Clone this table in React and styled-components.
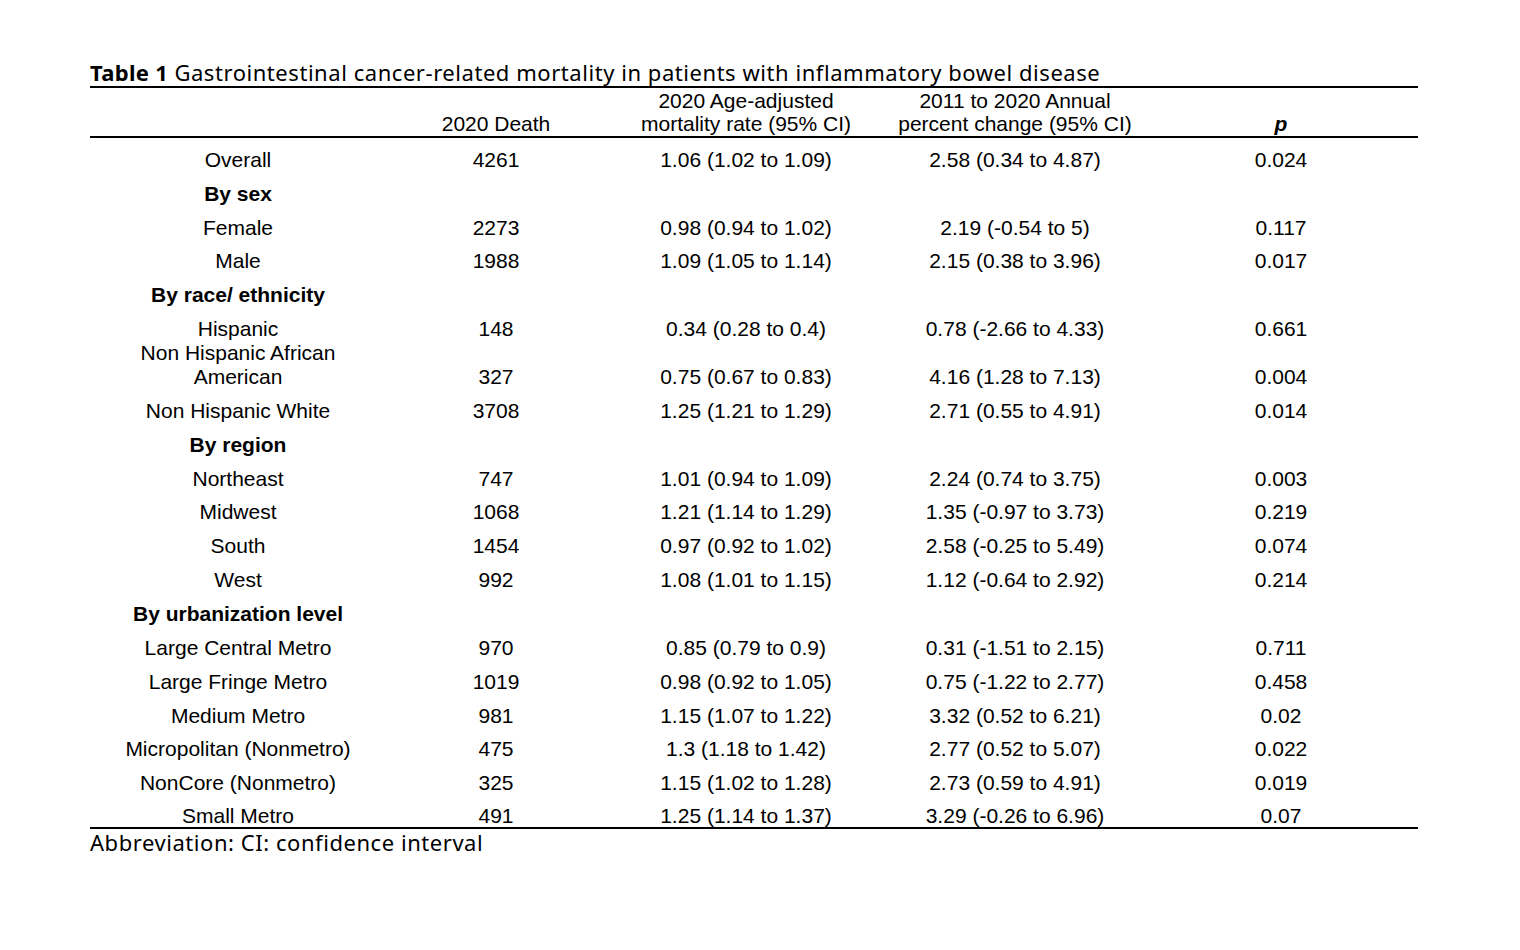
import React from 'react';
import styled, { createGlobalStyle } from 'styled-components';

const rows = [
  { label: 'Overall', death: '4261', rate: '1.06 (1.02 to 1.09)', apc: '2.58 (0.34 to 4.87)', p: '0.024' },
  { group: 'By sex' },
  { label: 'Female', death: '2273', rate: '0.98 (0.94 to 1.02)', apc: '2.19 (-0.54 to 5)', p: '0.117' },
  { label: 'Male', death: '1988', rate: '1.09 (1.05 to 1.14)', apc: '2.15 (0.38 to 3.96)', p: '0.017' },
  { group: 'By race/ ethnicity' },
  { label: 'Hispanic', death: '148', rate: '0.34 (0.28 to 0.4)', apc: '0.78 (-2.66 to 4.33)', p: '0.661' },
  { label: ['Non Hispanic African', 'American'], death: '327', rate: '0.75 (0.67 to 0.83)', apc: '4.16 (1.28 to 7.13)', p: '0.004' },
  { label: 'Non Hispanic White', death: '3708', rate: '1.25 (1.21 to 1.29)', apc: '2.71 (0.55 to 4.91)', p: '0.014' },
  { group: 'By region' },
  { label: 'Northeast', death: '747', rate: '1.01 (0.94 to 1.09)', apc: '2.24 (0.74 to 3.75)', p: '0.003' },
  { label: 'Midwest', death: '1068', rate: '1.21 (1.14 to 1.29)', apc: '1.35 (-0.97 to 3.73)', p: '0.219' },
  { label: 'South', death: '1454', rate: '0.97 (0.92 to 1.02)', apc: '2.58 (-0.25 to 5.49)', p: '0.074' },
  { label: 'West', death: '992', rate: '1.08 (1.01 to 1.15)', apc: '1.12 (-0.64 to 2.92)', p: '0.214' },
  { group: 'By urbanization level' },
  { label: 'Large Central Metro', death: '970', rate: '0.85 (0.79 to 0.9)', apc: '0.31 (-1.51 to 2.15)', p: '0.711' },
  { label: 'Large Fringe Metro', death: '1019', rate: '0.98 (0.92 to 1.05)', apc: '0.75 (-1.22 to 2.77)', p: '0.458' },
  { label: 'Medium Metro', death: '981', rate: '1.15 (1.07 to 1.22)', apc: '3.32 (0.52 to 6.21)', p: '0.02' },
  { label: 'Micropolitan (Nonmetro)', death: '475', rate: '1.3 (1.18 to 1.42)', apc: '2.77 (0.52 to 5.07)', p: '0.022' },
  { label: 'NonCore (Nonmetro)', death: '325', rate: '1.15 (1.02 to 1.28)', apc: '2.73 (0.59 to 4.91)', p: '0.019' },
  { label: 'Small Metro', death: '491', rate: '1.25 (1.14 to 1.37)', apc: '3.29 (-0.26 to 6.96)', p: '0.07' },
];

function App() {
  return (
    <>
      <GlobalStyle />
      <Page>
        <Figure>
          <Caption>
            <b>Table 1</b> Gastrointestinal cancer-related mortality in patients with inflammatory bowel disease
          </Caption>
          <Table>
            <colgroup>
              <col style={{ width: 296 }} />
              <col style={{ width: 220 }} />
              <col style={{ width: 280 }} />
              <col style={{ width: 258 }} />
              <col style={{ width: 274 }} />
            </colgroup>
            <thead>
              <tr>
                <HeadCell />
                <HeadCell>2020 Death</HeadCell>
                <HeadCell>2020 Age-adjusted<br />mortality rate (95% CI)</HeadCell>
                <HeadCell>2011 to 2020 Annual<br />percent change (95% CI)</HeadCell>
                <HeadCell><PLetter>p</PLetter></HeadCell>
              </tr>
            </thead>
            <tbody>
              {rows.map((r, i) =>
                r.group ? (
                  <Row key={i}>
                    <Cell $bold>{r.group}</Cell>
                    <Cell />
                    <Cell />
                    <Cell />
                    <Cell />
                  </Row>
                ) : (
                  <Row key={i} $tall={Array.isArray(r.label)}>
                    <Cell>
                      {Array.isArray(r.label) ? (
                        <TwoLine>
                          {r.label[0]}
                          <br />
                          {r.label[1]}
                        </TwoLine>
                      ) : (
                        r.label
                      )}
                    </Cell>
                    <Cell>{r.death}</Cell>
                    <Cell>{r.rate}</Cell>
                    <Cell>{r.apc}</Cell>
                    <Cell>{r.p}</Cell>
                  </Row>
                ),
              )}
            </tbody>
          </Table>
          <Note>Abbreviation: CI: confidence interval</Note>
        </Figure>
      </Page>
    </>
  );
}
export default App;

const GlobalStyle = createGlobalStyle`
  html, body {
    margin: 0;
    padding: 0;
    background: #ffffff;
  }
`;

const Page = styled.div`
  width: 1520px;
  height: 950px;
  padding: 58px 0 0 90px;
  box-sizing: border-box;
  background: #ffffff;
  color: #000000;
`;

const Figure = styled.div`
  width: 1328px;
  display: flex;
  flex-direction: column;
`;

const Caption = styled.div`
  font-family: 'Noto Sans', sans-serif;
  font-size: 22px;
  letter-spacing: 0.55px;
  line-height: 28px;
  border-bottom: 2px solid #000;
  b {
    font-weight: 700;
    letter-spacing: 0.3px;
  }
`;

const Table = styled.table`
  width: 1328px;
  border-collapse: collapse;
  table-layout: fixed;
  font-family: 'Liberation Sans', Arial, sans-serif;
  font-size: 21px;
  border-bottom: 2px solid #000;
`;

const HeadCell = styled.th`
  height: 47px;
  padding: 0 0 1px;
  font-weight: 400;
  line-height: 23px;
  text-align: center;
  vertical-align: bottom;
  border-bottom: 2px solid #000;
`;

const PLetter = styled.span`
  font-weight: 700;
  font-style: italic;
`;

const Row = styled.tr`
  height: ${({ $tall }) => ($tall ? '48px' : '33.85px')};
`;

const Cell = styled.td`
  padding: 0;
  line-height: 22px;
  text-align: center;
  vertical-align: bottom;
  white-space: nowrap;
  font-weight: ${({ $bold }) => ($bold ? 700 : 400)};
`;

const TwoLine = styled.span`
  display: inline-block;
  line-height: 24px;
  margin-bottom: -1px;
`;

const Note = styled.div`
  font-family: 'Noto Sans', sans-serif;
  font-size: 22px;
  letter-spacing: 0.55px;
  line-height: 26px;
`;
